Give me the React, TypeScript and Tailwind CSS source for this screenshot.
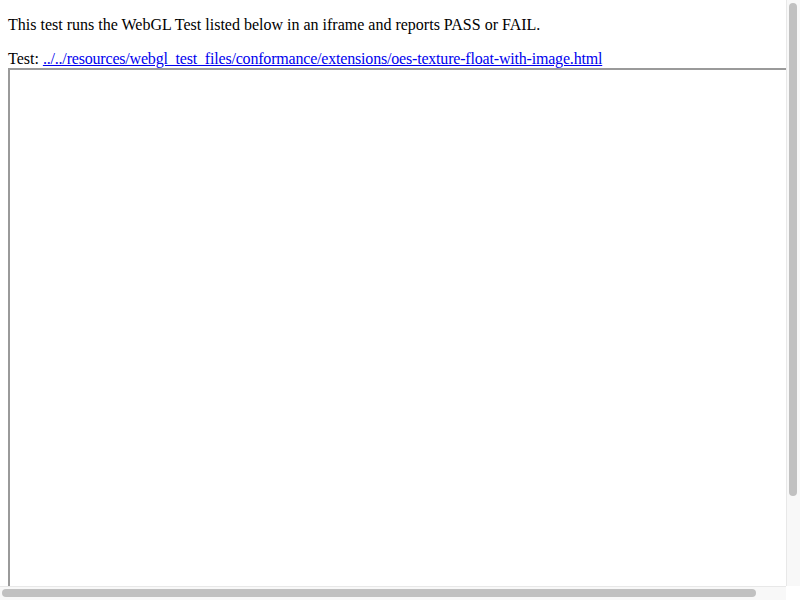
import React from "react";

const App = () => {
  return (
    <div className="relative h-[600px] w-[800px] overflow-hidden bg-white">
      <div className="m-2 font-['Liberation_Serif',serif] text-base leading-[normal] text-black">
        <p className="my-4">
          This test runs the WebGL Test listed below in an iframe and reports PASS or FAIL.
        </p>
        <div>
          Test:{" "}
          <a href="#" className="text-[#0000ee] underline tracking-[-0.19px]">
            ../../resources/webgl_test_files/conformance/extensions/oes-texture-float-with-image.html
          </a>
        </div>
        <div className="w-[804px] h-[604px] border-2 border-t-[#9a9a9a] border-l-[#9a9a9a] border-b-[#eeeeee] border-r-[#eeeeee] bg-white" />
      </div>

      {/* page scrollbars */}
      <div className="absolute right-0 top-0 w-[14px] h-[586px] bg-[#f8f8f8] border-l border-[#e8e8e8]">
        <div className="ml-[2px] mt-[3px] w-[8px] h-[493px] rounded-full bg-[#c1c1c1]" />
      </div>
      <div className="absolute left-0 bottom-0 w-[786px] h-[14px] bg-[#f8f8f8] border-t border-[#e8e8e8]">
        <div className="ml-[2px] mt-[2px] h-[8px] w-[754px] rounded-full bg-[#c1c1c1]" />
      </div>
      <div className="absolute right-0 bottom-0 w-[14px] h-[14px] bg-white" />
    </div>
  );
};

export default App;
